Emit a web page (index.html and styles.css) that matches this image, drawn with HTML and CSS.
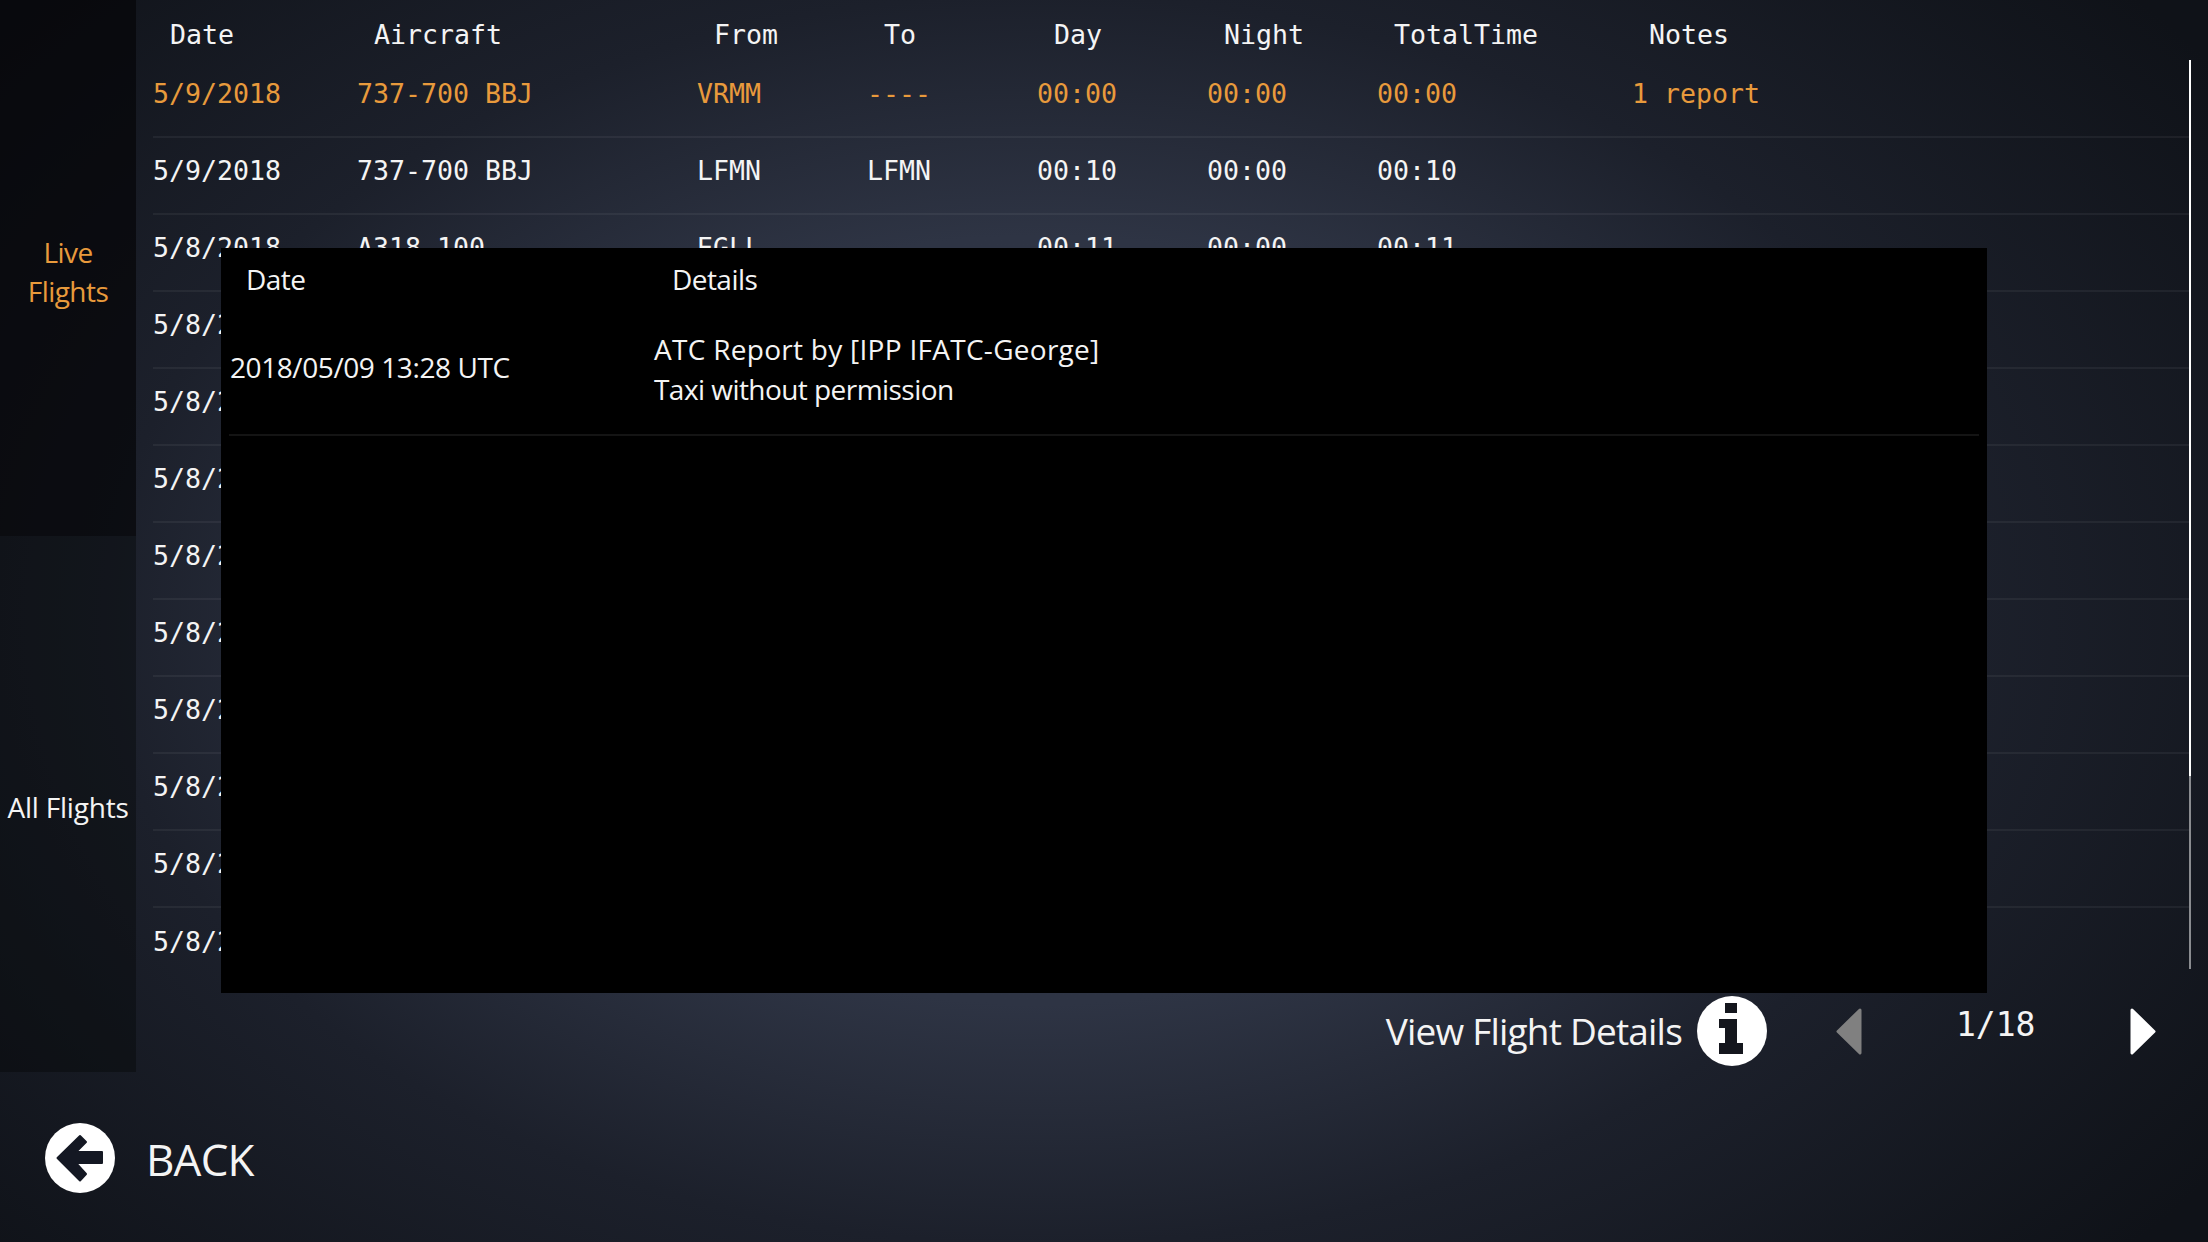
FILE: index.html
```html
<!DOCTYPE html>
<html lang="en">
<head>
<meta charset="utf-8">
<title>Flights</title>
<link rel="stylesheet" href="styles.css">
</head>
<body>
<div class="app">
  <div class="main">
    <nav class="sidebar">
      <div class="tab tab-active">Live<br>Flights</div>
      <div class="tab tab-idle">All Flights</div>
    </nav>
    <section class="content">
      <div class="table">
        <div class="row head">
          <span>Date</span><span>Aircraft</span><span>From</span><span>To</span><span>Day</span><span>Night</span><span>TotalTime</span><span>Notes</span>
        </div>
        <div class="row item current">
          <span>5/9/2018</span><span>737-700 BBJ</span><span>VRMM</span><span>----</span><span>00:00</span><span>00:00</span><span>00:00</span><span>1 report</span>
        </div>
        <div class="row item">
          <span>5/9/2018</span><span>737-700 BBJ</span><span>LFMN</span><span>LFMN</span><span>00:10</span><span>00:00</span><span>00:10</span><span></span>
        </div>
        <div class="row item">
          <span>5/8/2018</span><span>A318-100</span><span>EGLL</span><span>----</span><span>00:11</span><span>00:00</span><span>00:11</span><span></span>
        </div>
        <div class="row item"><span>5/8/2018</span></div>
        <div class="row item"><span>5/8/2018</span></div>
        <div class="row item"><span>5/8/2018</span></div>
        <div class="row item"><span>5/8/2018</span></div>
        <div class="row item"><span>5/8/2018</span></div>
        <div class="row item"><span>5/8/2018</span></div>
        <div class="row item"><span>5/8/2018</span></div>
        <div class="row item"><span>5/8/2018</span></div>
        <div class="row item last"><span>5/8/2018</span></div>
      </div>
      <div class="scrollbar"><div class="thumb"></div></div>
      <div class="pager">
        <span class="pager-label">View Flight Details</span>
        <svg class="info" width="70" height="70" viewBox="0 0 70 70" aria-hidden="true">
          <circle cx="35" cy="35" r="35" fill="#fff"/>
          <path d="M28 7h12v10H28zM22 23h18v24h6v11H22V47h6V32h-6z" fill="#14161d"/>
        </svg>
        <svg class="arrow-prev" width="26" height="47" viewBox="0 0 26 47" aria-hidden="true">
          <path d="M24 2 2 23.5 24 45z" fill="#808080" stroke="#808080" stroke-width="3" stroke-linejoin="round"/>
        </svg>
        <span class="pager-count">1/18</span>
        <svg class="arrow-next" width="26" height="47" viewBox="0 0 26 47" aria-hidden="true">
          <path d="M2 2 24 23.5 2 45z" fill="#fff" stroke="#fff" stroke-width="3" stroke-linejoin="round"/>
        </svg>
      </div>
    </section>
  </div>
  <footer class="footer">
    <svg class="back-icon" width="70" height="70" viewBox="0 0 70 70" aria-hidden="true">
      <circle cx="35" cy="35" r="35" fill="#fff"/>
      <path d="M12.5 35 35 13 41 19 31 29H57V40H31L41 51 35 57.5z" fill="#141823" stroke="#141823" stroke-width="2" stroke-linejoin="round"/>
    </svg>
    <span class="back-label">BACK</span>
  </footer>
  <div class="modal">
    <div class="modal-head">
      <span class="modal-head-date">Date</span>
      <span class="modal-head-details">Details</span>
    </div>
    <div class="modal-row">
      <span class="modal-date">2018/05/09 13:28 UTC</span>
      <span class="modal-details"><span class="report-by">ATC Report by [IPP IFATC-George]</span><br>Taxi without permission</span>
    </div>
  </div>
</div>
</body>
</html>
```
FILE: styles.css
```css
* { box-sizing: border-box; }
html, body { margin: 0; padding: 0; }
body { width: 2208px; height: 1242px; overflow: hidden; background: #12151e; }
.app {
  position: relative;
  width: 2208px;
  height: 1242px;
  overflow: hidden;
  color: #f4f4f4;
  font-family: "Open Sans", "Noto Sans", sans-serif;
  background: radial-gradient(ellipse 1200px 800px at 1040px 620px, #303646 0%, #2e3444 48%, #1c202b 78%, #0f1218 120%);
}
.main { display: flex; height: 1073px; }
.sidebar { width: 136px; flex: none; display: flex; flex-direction: column; }
.tab {
  height: 536px;
  display: flex;
  align-items: center;
  justify-content: center;
  text-align: center;
  font-size: 28px;
  letter-spacing: -0.55px;
}
.tab-active { background: rgba(5, 6, 8, 0.72); color: #e89a3c; line-height: 39px; padding-top: 8px; }
.tab-idle { background: rgba(5, 6, 8, 0.42); padding-top: 5px; letter-spacing: -0.2px; }
.content { position: relative; flex: 1; min-width: 0; }
.table { padding-left: 17px; height: 993px; padding-right: 18px; }
.row {
  display: grid;
  grid-template-columns: 204px 340px 170px 170px 170px 170px 255px 1fr;
  align-items: center;
  font-family: "DejaVu Sans Mono", "Liberation Mono", monospace;
  font-size: 26.6px;
  white-space: pre;
}
.head { height: 61px; padding: 7px 0 0 17px; }
.item { height: 77px; padding-bottom: 11px; border-bottom: 2px solid rgba(255, 255, 255, 0.055); }
.item.last { border-bottom: 0; }
.current { color: #e89a3c; }
.scrollbar {
  position: absolute;
  left: 2053px;
  top: 60px;
  width: 2px;
  height: 909px;
  background: #8a8c90;
}
.thumb { height: 716px; background: #fff; }
.pager {
  display: flex;
  align-items: center;
  justify-content: flex-end;
  height: 80px;
  padding: 0 52px 4px 0;
}
.pager-label { font-size: 37px; letter-spacing: -0.8px; margin-right: 15px; margin-bottom: 2px; }
.info { flex: none; margin-right: 69px; }
.arrow-prev, .arrow-next { flex: none; }
.pager-count {
  font-family: "DejaVu Sans Mono", "Liberation Mono", monospace;
  font-size: 33px;
  line-height: 1;
  width: 80px;
  margin: 0 94px 14px 94px;
}
.footer { display: flex; align-items: center; height: 169px; padding: 0 0 0 45px; }
.back-icon { flex: none; }
.back-label { font-size: 44px; margin-left: 31px; padding-top: 3px; letter-spacing: -0.8px; }
.modal {
  position: absolute;
  left: 221px;
  top: 248px;
  width: 1766px;
  height: 745px;
  background: #000;
  padding: 0 8px;
  font-size: 28px;
  letter-spacing: -0.55px;
}
.modal-head { display: flex; height: 46px; align-items: center; padding-top: 15px; }
.modal-head-date { margin-left: 17px; width: 426px; }
.modal-row {
  display: flex;
  align-items: center;
  height: 142px;
  padding: 6px 0 0 0;
  border-bottom: 2px solid #141414;
  line-height: 40px;
}
.modal-date { width: 425px; padding-left: 1px; letter-spacing: -0.42px; }
.modal-details { padding-top: 4px; }
.report-by { letter-spacing: 0.28px; }
```
